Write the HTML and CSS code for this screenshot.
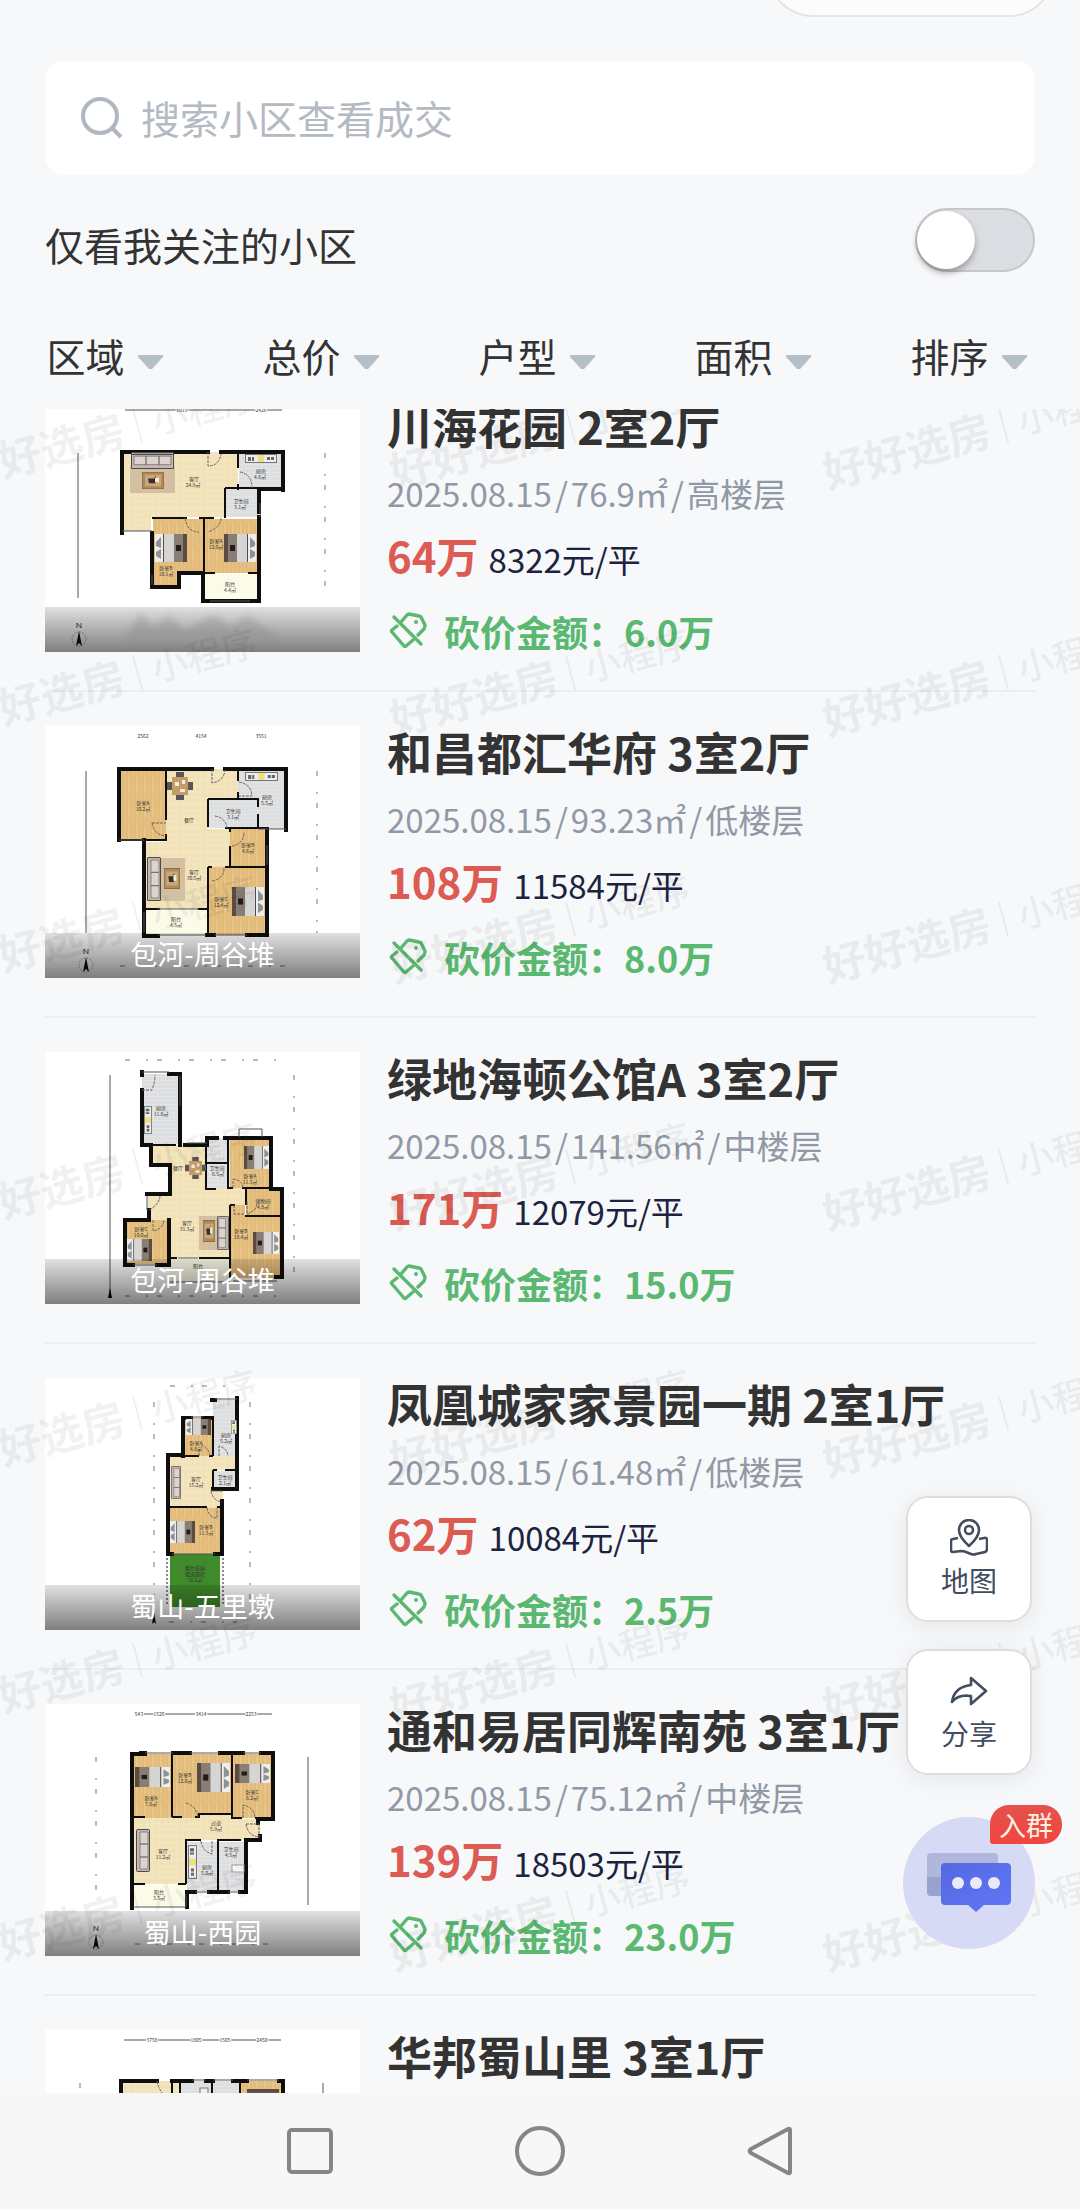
FILE: index.html
```html
<!DOCTYPE html>
<html lang="zh-CN">
<head>
  <meta charset="UTF-8">
  <meta name="viewport" content="width=device-width, initial-scale=1.0">
  <title>好好选房</title>
  <link rel="stylesheet" href="styles.css">
</head>
<body>

  <!-- shared shapes -->
  <svg class="defs" width="0" height="0" aria-hidden="true">
    <defs>
      <pattern id="wood" width="8" height="24" patternUnits="userSpaceOnUse">
        <rect width="8" height="24" fill="#e5c080"/>
        <path d="M2 0v24M6 0v24" stroke="#dfb774" stroke-width="1"/>
        <path d="M4 4v14" stroke="#eccd94" stroke-width="1"/>
      </pattern>
      <pattern id="tile" width="4" height="4" patternUnits="userSpaceOnUse">
        <rect width="4" height="4" fill="#dcdddf"/>
        <path d="M0 0h4M0 0v4" stroke="#e8e9eb" stroke-width="1"/>
      </pattern>
      <pattern id="floor" width="6" height="6" patternUnits="userSpaceOnUse">
        <rect width="6" height="6" fill="#f3e5c0"/>
        <path d="M0 3l3-3 3 3-3 3z" fill="#f1e1b7"/>
      </pattern>
    </defs>
    <symbol id="bed" viewBox="0 0 32 28" preserveAspectRatio="none">
      <rect x="0" y="0" width="32" height="28" fill="#5b4c43"/>
      <rect x="4" y="0" width="9" height="28" fill="#8a7d74"/>
      <rect x="13" y="0" width="10" height="28" fill="#d6d5d6"/>
      <rect x="24" y="0" width="8" height="28" fill="#eeeeec"/>
      <path d="M26 3l5 5v4l-5 2zM26 15l5 3v4l-5 3z" fill="#8d9296"/>
      <rect x="6" y="11" width="5" height="6" fill="#1d1d1d"/>
    </symbol>
    <symbol id="sofa" viewBox="0 0 14 43" preserveAspectRatio="none">
      <rect x="0.5" y="0.5" width="13" height="42" rx="1" fill="#c3bab5" stroke="#4d4845"/>
      <path d="M4 3h8v12H4zM4 15h8v13H4zM4 28h8v12H4z" fill="#dad3ce" stroke="#6a6461" stroke-width="0.7"/>
    </symbol>
    <symbol id="table" viewBox="0 0 22 18" preserveAspectRatio="none">
      <rect width="22" height="18" fill="#b08a5c" stroke="#7a5a38"/>
      <rect x="3" y="3" width="16" height="12" fill="#c9a779"/>
      <path d="M6 7h6l2-3v8H7z" fill="#3a3028"/>
      <rect x="13" y="6" width="4" height="5" fill="#efe9de"/>
    </symbol>
    <symbol id="dining" viewBox="0 0 26 28" preserveAspectRatio="none">
      <path d="M9 0h8v5H9zM9 23h8v5H9zM0 10h5v8H0zM21 10h5v8h-5z" fill="#59565a"/>
      <rect x="5" y="5" width="16" height="18" fill="#c59c66"/>
      <path d="M8 10h4v4H8zM15 8h3v4h-3zM13 17h5v3h-5z" fill="#f2ece3"/>
    </symbol>
    <symbol id="stove" viewBox="0 0 32 9" preserveAspectRatio="none">
      <rect x="0.5" y="0.5" width="31" height="8" fill="#ededed" stroke="#777"/>
      <rect x="13" y="1" width="6" height="7" fill="#efe07a"/>
      <path d="M3 3h3v4H3zM7 3h2v4H7zM22 3h3v3h-3zM26 3h3v3h-3z" fill="#666"/>
    </symbol>
    <symbol id="north" viewBox="0 0 18 26">
      <circle cx="9" cy="17" r="7" fill="none" stroke="#888" stroke-width="0.6" stroke-dasharray="2 1"/>
      <path d="M9 9l3 15-3-3-3 3z" fill="#111"/>
      <path d="M7 6V1l4 5V1" fill="none" stroke="#333" stroke-width="0.8"/>
    </symbol>
    <symbol id="tag" viewBox="0 0 38 38">
      <g fill="none" stroke="currentColor" stroke-width="3.4" stroke-linecap="round" stroke-linejoin="round">
        <path d="M12 10l6-7q1-1 2-1l10 2q1 0 2 1l4 8q0 2-1 4l-6 6"/>
        <path d="M8 14l-5 4q-1 1 0 2l12 14q1 1 2 0l7-6"/>
        <path d="M5 5l27 27"/>
      </g>
      <circle cx="27" cy="10" r="2" fill="currentColor"/>
    </symbol>
  </svg>

  <div class="app">
    <div class="topbar"><div class="capsule"></div></div>

    <label class="search">
      <svg class="search-icon" viewBox="0 0 42 42" aria-hidden="true">
        <circle cx="19" cy="19" r="17"/>
        <path d="M31 31l9 9"/>
      </svg>
      <input type="text" placeholder="搜索小区查看成交" aria-label="搜索小区查看成交">
    </label>

    <div class="follow">
      <label for="only-follow">仅看我关注的小区</label>
      <input type="checkbox" id="only-follow" class="switch">
    </div>

    <nav class="filters">
      <button type="button">区域<i class="caret"></i></button>
      <button type="button">总价<i class="caret"></i></button>
      <button type="button">户型<i class="caret"></i></button>
      <button type="button">面积<i class="caret"></i></button>
      <button type="button">排序<i class="caret"></i></button>
    </nav>

    <main class="list">
      <div class="list-inner">

        <article class="item">
          <div class="thumb">
            <svg viewBox="0 0 315 252" aria-hidden="true">
              <path class="dim" d="M80 10h157M33 53v145"/>
              <path class="dim dashed" d="M280 53v145"/>
              <text class="num" x="137" y="12">6019</text>
              <text class="num" x="216" y="12">2426</text>
              <path class="living" d="M77 52h116v65H106v14H77z"/>
              <rect class="tiles" x="194" y="52" width="44" height="36"/>
              <rect class="tiles" x="180" y="89" width="34" height="28"/>
              <path class="bedroom" d="M108 119h51v54h-24v13h-27z"/>
              <rect class="bedroom" x="160" y="119" width="55" height="54"/>
              <rect class="balcony" x="158" y="174" width="57" height="26"/>
              <path class="inner" d="M193 52v16M193 84v6M180 88v30M107 118h35M154 118h15M159 118v56M180 88h58M160 173h10M203 173h12"/>
              <path class="wall" d="M163 52H77v81M176 52h62v38M238 89h-22M214 89v23M214 117v84H158v-28h-24v14h-27v-54"/>
              <path class="window" d="M77 131h30M215 103v14M165 201h40M107 175v10"/>
              <path class="door" d="M163 52v14q11 0 13-12M195 72q12 2 12 16M140 118q2 14 14 14M176 118q0 9-13 14"/>
              <use href="#sofa" transform="translate(86 66) rotate(-90)" width="14" height="43"/>
              <rect class="rug" x="85" y="66" width="45" height="27"/>
              <use href="#sofa" transform="translate(86 69) rotate(-90)" width="15" height="43"/>
              <use href="#table" x="97" y="72" width="22" height="17"/>
              <use href="#stove" x="200" y="54" width="32" height="9"/>
              <use href="#bed" transform="translate(142 134) scale(-1 1)" width="32" height="28"/>
              <use href="#bed" x="179" y="134" width="32" height="28"/>
              <text class="room" x="149" y="81">客厅</text><text class="room" x="148" y="87">24.9㎡</text>
              <text class="room" x="216" y="73">厨房</text><text class="room" x="215" y="79">4.6㎡</text>
              <text class="room" x="196" y="103">卫生间</text><text class="room" x="195" y="109">3.1㎡</text>
              <text class="room" x="171" y="143">卧室A</text><text class="room" x="171" y="149">12.0㎡</text>
              <text class="room" x="121" y="170">卧室B</text><text class="room" x="121" y="176">10.1㎡</text>
              <text class="room" x="185" y="186">阳台</text><text class="room" x="185" y="192">4.4㎡</text>
              <use href="#north" x="25" y="222" width="18" height="26"/>
            </svg>
            <div class="place">
              <svg class="smudge" viewBox="0 0 160 36" aria-hidden="true">
                <path d="M2 30L18 6l12 14L46 8l16 16 22-14q14-4 22 10l18-12 32 22z"/>
              </svg>
            </div>
          </div>
          <div class="info">
            <h2>川海花园 2室2厅</h2>
            <p class="meta">2025.08.15<i>/</i>76.9㎡<i>/</i>高楼层</p>
            <p class="price"><b>64万</b>8322元/平</p>
            <p class="cut"><svg aria-hidden="true"><use href="#tag"/></svg>砍价金额：6.0万</p>
          </div>
        </article>

        <article class="item">
          <div class="thumb">
            <svg viewBox="0 0 315 252" aria-hidden="true">
              <path class="dim" d="M41 45v162"/>
              <path class="dim dashed" d="M272 45v162M75 240h165"/>
              <text class="num" x="98" y="12">2562</text>
              <text class="num" x="156" y="12">4154</text>
              <text class="num" x="216" y="12">3551</text>
              <path class="living" d="M121 43h72v30h-30v110H99v-67h22z"/>
              <rect class="living" x="162" y="103" width="23" height="38"/>
              <rect class="bedroom" x="74" y="43" width="47" height="70"/>
              <path class="tiles" d="M193 43h48v60h-28V73h-20z"/>
              <rect class="tiles" x="163" y="74" width="50" height="28"/>
              <rect class="bedroom" x="185" y="103" width="37" height="37"/>
              <rect class="bedroom" x="164" y="141" width="58" height="68"/>
              <rect class="balcony" x="99" y="184" width="64" height="25"/>
              <path class="inner" d="M121 43v51M121 108v6H74M193 43v12M193 66v7M163 73h50v8M213 88v14M163 73v28M180 102h44M185 102v4M185 120v21M163 141h4M180 141h44M163 141v68M99 183h16M153 183h10"/>
              <path class="wall" d="M167 43H74v71M180 43h61v61M99 114v32M99 170v40h14M162 209h7M202 209h20V103M99 146v24"/>
              <path class="window" d="M74 114h25M99 186v20M113 209h48M169 209h33M222 119v20M213 103h28M112 183h42"/>
              <path class="door" d="M167 43v14q12-2 13-13M194 56q12 2 13 14h-13M107 97h14M107 97q2 12 14 13M170 90q11 2 12 12M187 120q12-2 12-14M167 155q12-2 12-13"/>
              <use href="#dining" x="122" y="46" width="26" height="28"/>
              <rect class="rug" x="109" y="132" width="31" height="43"/>
              <use href="#sofa" x="102" y="131" width="14" height="44"/>
              <use href="#table" x="119" y="142" width="16" height="21"/>
              <use href="#stove" x="200" y="46" width="33" height="9"/>
              <use href="#bed" x="187" y="161" width="32" height="29"/>
              <text class="room" x="98" y="79">卧室A</text><text class="room" x="98" y="85">10.2㎡</text>
              <text class="room" x="144" y="96">餐厅</text>
              <text class="room" x="149" y="148">客厅</text><text class="room" x="149" y="154">30.5㎡</text>
              <text class="room" x="222" y="73">厨房</text><text class="room" x="222" y="79">5.5㎡</text>
              <text class="room" x="188" y="87">卫生间</text><text class="room" x="188" y="93">3.1㎡</text>
              <text class="room" x="203" y="121">卧室B</text><text class="room" x="203" y="127">4.6㎡</text>
              <text class="room" x="176" y="175">卧室C</text><text class="room" x="176" y="181">12.4㎡</text>
              <text class="room" x="131" y="195">阳台</text><text class="room" x="131" y="201">4.5㎡</text>
              <use href="#north" x="32" y="222" width="18" height="26"/>
            </svg>
            <div class="place">包河-周谷堆</div>
          </div>
          <div class="info">
            <h2>和昌都汇华府 3室2厅</h2>
            <p class="meta">2025.08.15<i>/</i>93.23㎡<i>/</i>低楼层</p>
            <p class="price"><b>108万</b>11584元/平</p>
            <p class="cut"><svg aria-hidden="true"><use href="#tag"/></svg>砍价金额：8.0万</p>
          </div>
        </article>

        <article class="item">
          <div class="thumb">
            <svg viewBox="0 0 315 252" aria-hidden="true">
              <path class="dim" d="M65 23v217"/>
              <path class="dim dashed" d="M249 23v205M80 244h155M80 8h155"/>
              <rect class="tiles" x="97" y="22" width="38" height="70"/>
              <path class="living" d="M106 93h56v43h38v17h-15v53h-61v-38h-21v-26h22v-30h-19z"/>
              <rect class="tiles" x="162" y="86" width="23" height="50"/>
              <rect class="bedroom" x="185" y="86" width="41" height="50"/>
              <rect class="bedroom" x="201" y="137" width="35" height="28"/>
              <path class="bedroom" d="M185 153h15v11h36v62h-51z"/>
              <rect class="bedroom" x="80" y="168" width="44" height="44"/>
              <rect class="balcony" x="124" y="206" width="61" height="24"/>
              <path class="inner" d="M161 86v51h10M162 111h20M183 86v50h5M197 136h40M201 136v17M185 153h5M185 153v75M200 164h37M124 168v38h8M154 206h31M106 93h25"/>
              <path class="wall" d="M97 23v-3M124 22h11v71M97 38v55h9v20h19v29h-23M104 158v10H80v45h8M112 213h12V168M140 93h22v-7h10M180 86h46v51h11v88h-6"/>
              <path class="window" d="M97 20h27M135 24v30M142 91h20M194 85v-8h23v8M88 213h24M124 230h61M188 229h44M153 206h-20M102 144v14"/>
              <path class="door" d="M97 38h10q3-8 3-15M104 158q10-5 11-14M108 168v11q9-1 11-11M188 136v-9q9 1 10 9M202 150v12q9-3 10-10M189 153v9h10"/>
              <use href="#stove" transform="translate(107 54) rotate(90)" width="28" height="8"/>
              <use href="#dining" x="140" y="105" width="21" height="22"/>
              <rect class="rug" x="154" y="164" width="28" height="34"/>
              <use href="#sofa" transform="translate(184 164) scale(-1 1)" width="12" height="34"/>
              <use href="#table" x="158" y="168" width="12" height="22"/>
              <use href="#bed" x="199" y="94" width="25" height="23"/>
              <use href="#bed" x="208" y="180" width="26" height="22"/>
              <use href="#bed" transform="translate(107 187) scale(-1 1)" width="25" height="22"/>
              <text class="room" x="116" y="58">厨房</text><text class="room" x="116" y="64">11.8㎡</text>
              <text class="room" x="133" y="118">餐厅</text>
              <text class="room" x="172" y="118">卫生间</text><text class="room" x="173" y="124">6.5㎡</text>
              <text class="room" x="205" y="126">卧室A</text><text class="room" x="205" y="132">11.3㎡</text>
              <text class="room" x="218" y="151">储物间</text><text class="room" x="218" y="157">4.8㎡</text>
              <text class="room" x="196" y="181">卧室B</text><text class="room" x="196" y="187">18.4㎡</text>
              <text class="room" x="96" y="179">卧室C</text><text class="room" x="96" y="185">10.0㎡</text>
              <text class="room" x="142" y="173">客厅</text><text class="room" x="142" y="179">31.3㎡</text>
              <text class="room" x="153" y="216">阳台</text>
              <path d="M65 236l2 10h-4z"/>
            </svg>
            <div class="place">包河-周谷堆</div>
          </div>
          <div class="info">
            <h2>绿地海顿公馆A 3室2厅</h2>
            <p class="meta">2025.08.15<i>/</i>141.56㎡<i>/</i>中楼层</p>
            <p class="price"><b>171万</b>12079元/平</p>
            <p class="cut"><svg aria-hidden="true"><use href="#tag"/></svg>砍价金额：15.0万</p>
          </div>
        </article>

        <article class="item">
          <div class="thumb">
            <svg viewBox="0 0 315 252" aria-hidden="true">
              <path class="dim dashed" d="M109 24v206M205 24v206M125 8h60M124 244h68"/>
              <rect class="tiles" x="168" y="22" width="24" height="56"/>
              <rect class="bedroom" x="138" y="40" width="30" height="38"/>
              <path class="living" d="M124 78h68v14h-24v20h10v18h-54z"/>
              <rect class="tiles" x="169" y="93" width="23" height="18"/>
              <rect class="bedroom" x="124" y="130" width="53" height="46"/>
              <rect class="garden" x="125" y="176" width="50" height="53"/>
              <path class="inner" d="M168 38v40M136 78h18M164 78h4M180 92h12M168 92v20M168 92h4M124 129h38M172 129h6"/>
              <path class="wall" d="M167 22h3M138 78V40h8M158 40h9M192 20v91h-24M138 77h-15v99h4M177 123v53h-7"/>
              <path class="window" d="M170 21h22M146 39h12M127 176h43"/>
              <path class="door" d="M174 78v-10q8 2 9 10M154 78v-9M156 67q8 3 9 11M166 113h12M166 113q2 10 11 11M162 130q2 10 10 10v-10"/>
              <path class="dots" d="M122 176v52M178 176v52"/>
              <use href="#bed" transform="translate(166 41) scale(-1 1)" width="25" height="16"/>
              <use href="#stove" transform="translate(192 42) rotate(90)" width="14" height="6"/>
              <use href="#sofa" x="126" y="88" width="10" height="33"/>
              <use href="#bed" transform="translate(150 143) scale(-1 1)" width="25" height="22"/>
              <text class="room" x="151" y="67">卧室A</text><text class="room" x="151" y="73">4.8㎡</text>
              <text class="room" x="181" y="59">厨房</text><text class="room" x="181" y="65">5.2㎡</text>
              <text class="room" x="151" y="103">客厅</text><text class="room" x="151" y="109">15.2㎡</text>
              <text class="room" x="180" y="101">卫生间</text><text class="room" x="180" y="107">2.1㎡</text>
              <text class="room" x="161" y="151">卧室B</text><text class="room" x="161" y="157">11.3㎡</text>
              <text class="room" x="150" y="192">露台花园</text><text class="room" x="150" y="198">赠送面积</text><text class="room" x="150" y="204">18.2㎡</text>
              <path d="M109 234l2 12-2-2-2 2z"/>
            </svg>
            <div class="place">蜀山-五里墩</div>
          </div>
          <div class="info">
            <h2>凤凰城家家景园一期 2室1厅</h2>
            <p class="meta">2025.08.15<i>/</i>61.48㎡<i>/</i>低楼层</p>
            <p class="price"><b>62万</b>10084元/平</p>
            <p class="cut"><svg aria-hidden="true"><use href="#tag"/></svg>砍价金额：2.5万</p>
          </div>
        </article>

        <article class="item">
          <div class="thumb">
            <svg viewBox="0 0 315 252" aria-hidden="true">
              <path class="dim" d="M90 10h137M263 53v148"/>
              <path class="dim dashed" d="M51 53v148M90 240h137"/>
              <text class="num" x="94" y="12">543</text>
              <text class="num" x="114" y="12">1526</text>
              <text class="num" x="156" y="12">3414</text>
              <text class="num" x="206" y="12">2253</text>
              <rect class="bedroom" x="88" y="50" width="39" height="64"/>
              <path class="bedroom" d="M128 50h59v62h-33v2h-26z"/>
              <rect class="bedroom" x="188" y="50" width="39" height="64"/>
              <path class="living" d="M88 114h66v-3h33v4h28v21h-74v44H88z"/>
              <rect class="tiles" x="142" y="138" width="31" height="49"/>
              <rect class="tiles" x="174" y="138" width="28" height="49"/>
              <rect class="balcony" x="88" y="181" width="53" height="22"/>
              <path class="inner" d="M127 50v63M87 113h13M127 113h10M150 113h4v-3h33v3M187 50v64h10M210 114h8M141 180v-44h15M172 136h24M173 136v52M88 180h12M133 180h8"/>
              <path class="wall" d="M100 50H87v154M96 49h4M128 49h17M175 49h23M216 49h12v66h-15v4M215 132v4h-14v52h-6M183 188h-19M150 188h-8v15"/>
              <path class="window" d="M100 49h28M145 49h30M198 49h18M88 203h53M150 188h14M183 188h12M141 190v13"/>
              <path class="door" d="M141 99q10 3 12 14M198 114v-13q11 2 12 13M201 120h13v14M201 120q2 12 13 13M156 137q1 10 11 13v-13"/>
              <use href="#bed" x="90" y="63" width="35" height="20"/>
              <use href="#bed" x="152" y="59" width="33" height="29"/>
              <use href="#bed" x="190" y="60" width="35" height="19"/>
              <use href="#sofa" x="91" y="125" width="14" height="43"/>
              <use href="#stove" transform="translate(152 141) rotate(90)" width="34" height="9"/>
              <rect x="187" y="161" width="12" height="7" fill="#fff" stroke="#999" stroke-width="1"/>
              <text class="room" x="106" y="96">卧室A</text><text class="room" x="106" y="102">7.8㎡</text>
              <text class="room" x="140" y="73">卧室B</text><text class="room" x="140" y="79">12.0㎡</text>
              <text class="room" x="207" y="90">卧室C</text><text class="room" x="207" y="96">8.2㎡</text>
              <text class="room" x="171" y="121">过道</text><text class="room" x="171" y="127">5.9㎡</text>
              <text class="room" x="118" y="149">客厅</text><text class="room" x="118" y="155">11.2㎡</text>
              <text class="room" x="162" y="165">厨房</text><text class="room" x="162" y="171">5.0㎡</text>
              <text class="room" x="186" y="147">卫生间</text><text class="room" x="186" y="153">4.5㎡</text>
              <text class="room" x="114" y="190">阳台</text><text class="room" x="114" y="196">3.5㎡</text>
              <use href="#north" x="42" y="221" width="18" height="26"/>
            </svg>
            <div class="place">蜀山-西园</div>
          </div>
          <div class="info">
            <h2>通和易居同辉南苑 3室1厅</h2>
            <p class="meta">2025.08.15<i>/</i>75.12㎡<i>/</i>中楼层</p>
            <p class="price"><b>139万</b>18503元/平</p>
            <p class="cut"><svg aria-hidden="true"><use href="#tag"/></svg>砍价金额：23.0万</p>
          </div>
        </article>

        <article class="item">
          <div class="thumb">
            <svg viewBox="0 0 315 252" aria-hidden="true">
              <path class="dim" d="M79 10h157M278 53v140"/>
              <path class="dim dashed" d="M35 53v140"/>
              <text class="num" x="107" y="12">3758</text>
              <text class="num" x="151" y="12">1805</text>
              <text class="num" x="180" y="12">1505</text>
              <text class="num" x="217" y="12">2450</text>
              <rect class="living" x="76" y="51" width="59" height="100"/>
              <rect class="tiles" x="136" y="51" width="30" height="60"/>
              <rect class="tiles" x="167" y="51" width="28" height="60"/>
              <rect class="bedroom" x="196" y="51" width="42" height="60"/>
              <path class="inner" d="M135 51v60M167 51v60M195 51v60M127 51v60"/>
              <path class="wall" d="M76 150V51h36M127 51h20M161 51h7M188 51h14M234 51h4v100"/>
              <path class="window" d="M147 50h14M168 50h20M202 50h32"/>
              <path class="door" d="M112 51q2 12 14 20"/>
              <use href="#bed" transform="translate(234 59) rotate(90)" width="30" height="32"/>
              <rect x="155" y="58" width="8" height="14" fill="#eee" stroke="#777"/>
            </svg>
          </div>
          <div class="info">
            <h2>华邦蜀山里 3室1厅</h2>
          </div>
        </article>

      </div>

      <svg class="watermark" aria-hidden="true">
        <defs>
          <pattern id="mark" x="-50" y="-40" width="433" height="247" patternUnits="userSpaceOnUse">
            <g transform="translate(12 120) rotate(-15)">
              <text class="mark-name" x="0" y="0">好好选房</text>
              <path d="M186 -34v36" stroke="#000" stroke-width="2"/>
              <text class="mark-kind" x="201" y="-2">小程序</text>
            </g>
          </pattern>
        </defs>
        <rect width="100%" height="100%" fill="url(#mark)"/>
      </svg>
    </main>

    <footer class="navbar">
      <button type="button" aria-label="最近任务">
        <svg viewBox="0 0 50 50"><rect x="4" y="4" width="42" height="42" rx="3"/></svg>
      </button>
      <button type="button" aria-label="主页">
        <svg viewBox="0 0 50 50"><circle cx="25" cy="25" r="23"/></svg>
      </button>
      <button type="button" aria-label="返回">
        <svg viewBox="0 0 50 50"><path d="M45 4v42q0 2-2 1L6 27q-3-2 0-4L43 3q2-1 2 1z"/></svg>
      </button>
    </footer>

    <aside class="floats">
      <button type="button" class="float-btn">
        <svg viewBox="0 0 38 38" aria-hidden="true">
          <path d="M19 27q-10-9-10-16a10 10 0 0 1 20 0q0 7-10 16z"/>
          <circle cx="19" cy="11" r="4"/>
          <path d="M8 19l-5 1q-2 0-2 2v9q0 2 2 2l8-1q3 0 5 1l5 2q3 1 5 0l9-2q2-1 2-3v-9q0-3-3-2l-5 1"/>
        </svg>
        地图
      </button>
      <button type="button" class="float-btn">
        <svg viewBox="0 0 38 38" aria-hidden="true">
          <path d="M21 6l15 13-15 13v-8q-13-2-19 6 2-15 19-17z"/>
        </svg>
        分享
      </button>
      <button type="button" class="chat" aria-label="入群">
        <svg viewBox="0 0 88 64" aria-hidden="true">
          <defs>
            <linearGradient id="bubble" x1="0" y1="0" x2="1" y2="1">
              <stop offset="0" stop-color="#5468e0"/>
              <stop offset="1" stop-color="#6076f6"/>
            </linearGradient>
          </defs>
          <rect x="2" y="2" width="71" height="43" rx="4" fill="#afb8dc"/>
          <path d="M2 26h15v19H6q-4 0-4-4z" fill="#98a2cf"/>
          <path d="M20 12h61q5 0 5 4v34q0 4-5 4H59l-8 7-8-7H20q-4 0-4-4V16q0-4 4-4z" fill="url(#bubble)"/>
          <g fill="#e9ebfb"><circle cx="33" cy="32" r="6"/><circle cx="51" cy="32" r="6"/><circle cx="69" cy="32" r="6"/></g>
        </svg>
        <span class="badge">入群</span>
      </button>
    </aside>
  </div>

</body>
</html>
```

FILE: styles.css
```css
* {
  box-sizing: border-box;
}

body {
  margin: 0;
  background: #f7f8fa;
  color: #333;
  font-family: "Noto Sans CJK SC", sans-serif;
}

button {
  border: 0;
  padding: 0;
  background: none;
  color: inherit;
  font: inherit;
}

.defs {
  position: absolute;
}

.app {
  position: relative;
  display: flex;
  flex-direction: column;
  height: 100vh;
  overflow: hidden;
}

/* header */
.topbar {
  display: flex;
  flex: none;
  justify-content: flex-end;
  align-items: flex-end;
  height: 17px;
  padding-right: 25px;
  overflow: hidden;
}

.capsule {
  flex: none;
  width: 288px;
  height: 92px;
  border: 2px solid #e4e5e6;
  border-radius: 46px;
  background: #fcfcfc;
}

.search {
  display: flex;
  flex: none;
  align-items: center;
  gap: 18px;
  height: 114px;
  margin: 44px 45px 0;
  padding: 0 36px;
  border-radius: 20px;
  background: #fff;
}

.search-icon {
  width: 42px;
  height: 42px;
  fill: none;
  stroke: #b0b7bf;
  stroke-width: 4;
}

.search input {
  flex: 1;
  min-width: 0;
  border: 0;
  padding: 0 0 3px;
  outline: none;
  background: none;
  color: #333;
  font: inherit;
  font-size: 39px;
}

.search input::placeholder {
  color: #b4bac2;
}

.follow {
  display: flex;
  flex: none;
  justify-content: space-between;
  align-items: flex-end;
  height: 64px;
  margin: 33px 45px 0;
  font-size: 39px;
  line-height: 56px;
}

.switch {
  appearance: none;
  display: flex;
  width: 120px;
  height: 64px;
  margin: 0;
  border: 2px solid #c6c7ca;
  border-radius: 32px;
  background: #dcdde2;
}

.switch::before {
  content: "";
  width: 58px;
  height: 58px;
  margin: 1px 0;
  border-radius: 50%;
  background: #fff;
  box-shadow: 0 4px 6px rgba(0, 0, 0, 0.3);
}

.switch:checked {
  justify-content: flex-end;
  background: #5bb870;
}

.filters {
  display: grid;
  flex: none;
  grid-template-columns: repeat(5, 1fr);
  height: 104px;
  margin-top: 33px;
}

.filters button {
  display: flex;
  justify-content: center;
  align-items: center;
  gap: 13px;
  padding: 0 6px 4px 0;
  font-size: 39px;
}

.caret {
  width: 26px;
  height: 15px;
  margin-top: 14px;
  background: #b4bfc6;
  clip-path: polygon(4% 0, 96% 0, 100% 12%, 56% 96%, 44% 96%, 0 12%);
}

/* list */
.list {
  position: relative;
  flex: 1;
  min-height: 0;
  overflow: hidden;
}

.list-inner {
  margin: -9px 45px 0;
}

.item {
  display: flex;
  gap: 27px;
  margin-bottom: 34px;
  padding-bottom: 38px;
  border-bottom: 2px solid #eceef0;
}

.thumb {
  position: relative;
  flex: none;
  width: 315px;
  height: 252px;
  background: #fff;
}

.thumb > svg {
  display: block;
  width: 100%;
  height: 100%;
}

.place {
  position: absolute;
  right: 0;
  bottom: 0;
  left: 0;
  height: 45px;
  background: linear-gradient(rgba(0, 0, 0, 0.12), rgba(0, 0, 0, 0.5));
  color: #fff;
  font-size: 27px;
  line-height: 42px;
  text-align: center;
}

.smudge {
  height: 36px;
  fill: rgba(110, 110, 110, 0.25);
  filter: blur(3px);
}

.info {
  flex: 1;
  min-width: 0;
}

.info h2 {
  margin: 0;
  font-size: 45px;
  font-weight: 700;
  line-height: 51px;
  white-space: nowrap;
}

.info p {
  margin: 0;
  white-space: nowrap;
}

.info .meta {
  margin-top: 18px;
  color: #9198a6;
  font-size: 33px;
  line-height: 48px;
}

.meta i {
  padding: 0 3px;
  font-style: normal;
}

.info .price {
  display: flex;
  align-items: baseline;
  gap: 10px;
  height: 54px;
  margin-top: 14px;
  color: #1c2340;
  font-size: 33px;
  line-height: 48px;
}

.price b {
  color: #dc5b53;
  font-size: 42px;
}

.info .cut {
  display: flex;
  align-items: center;
  gap: 17px;
  margin-top: 28px;
  color: #5bb870;
  font-size: 36px;
  font-weight: 700;
  line-height: 36px;
}

.cut svg {
  width: 38px;
  height: 38px;
  margin: -1px 0 -1px 2px;
}

.watermark {
  position: absolute;
  top: 0;
  left: 0;
  width: 100%;
  height: 100%;
  opacity: 0.05;
  pointer-events: none;
}

.mark-name {
  font-size: 43px;
  font-weight: 700;
}

.mark-kind {
  font-size: 36px;
  font-weight: 500;
}

/* floor plans */
.living { fill: url(#floor); }
.bedroom { fill: url(#wood); }
.tiles { fill: url(#tile); }
.balcony { fill: #fbfbe8; }
.garden { fill: #3f8a2b; }
.rug { fill: #d3c0a2; }

.wall,
.inner,
.window,
.door,
.dim,
.dots {
  fill: none;
  stroke: #0e0e0e;
}

.wall { stroke-width: 4; stroke-linecap: square; }
.inner { stroke-width: 2; }
.window { stroke: #555; stroke-width: 1; }
.door { stroke: #666; stroke-width: 1; stroke-dasharray: 3 1; }
.dim { stroke: #555; stroke-width: 1; }
.dashed { stroke: #777; stroke-dasharray: 5 16 2 9; }
.dots { stroke-width: 1; stroke-dasharray: 2 2; }

.room,
.num {
  fill: #333;
  font-size: 5px;
  text-anchor: middle;
}

.num {
  stroke: #fff;
  stroke-width: 2;
  paint-order: stroke;
}

/* floating buttons */
.floats {
  position: absolute;
  right: 45px;
  bottom: 260px;
  display: flex;
  flex-direction: column;
  align-items: center;
  gap: 27px;
}

.float-btn {
  display: flex;
  flex-direction: column;
  justify-content: center;
  align-items: center;
  gap: 4px;
  width: 126px;
  height: 126px;
  border: 2px solid #dcdee1;
  border-radius: 22px;
  background: #fff;
  box-shadow: 0 4px 24px rgba(0, 0, 0, 0.08);
  color: #434d60;
  font-size: 28px;
  line-height: 38px;
}

.float-btn svg {
  width: 38px;
  height: 38px;
  fill: none;
  stroke: #434d60;
  stroke-width: 2.6;
  stroke-linejoin: round;
}

.chat {
  position: relative;
  display: flex;
  justify-content: center;
  align-items: center;
  width: 132px;
  height: 132px;
  margin-top: 15px;
  border-radius: 50%;
  background: #d7daf5;
}

.chat svg {
  width: 88px;
  height: 64px;
}

.badge {
  position: absolute;
  top: -12px;
  right: -27px;
  padding: 0 9px;
  border-radius: 19px 19px 19px 3px;
  background: linear-gradient(#e4524c, #f2453f);
  color: #fff1e2;
  font-size: 27px;
  line-height: 39px;
}

/* system bar */
.navbar {
  display: flex;
  flex: none;
  justify-content: center;
  align-items: center;
  gap: 180px;
  height: 116px;
  background: #f7f7f7;
}

.navbar button,
.navbar svg {
  display: block;
  width: 50px;
  height: 50px;
}

.navbar svg {
  fill: none;
  stroke: #868686;
  stroke-width: 4;
}
```
